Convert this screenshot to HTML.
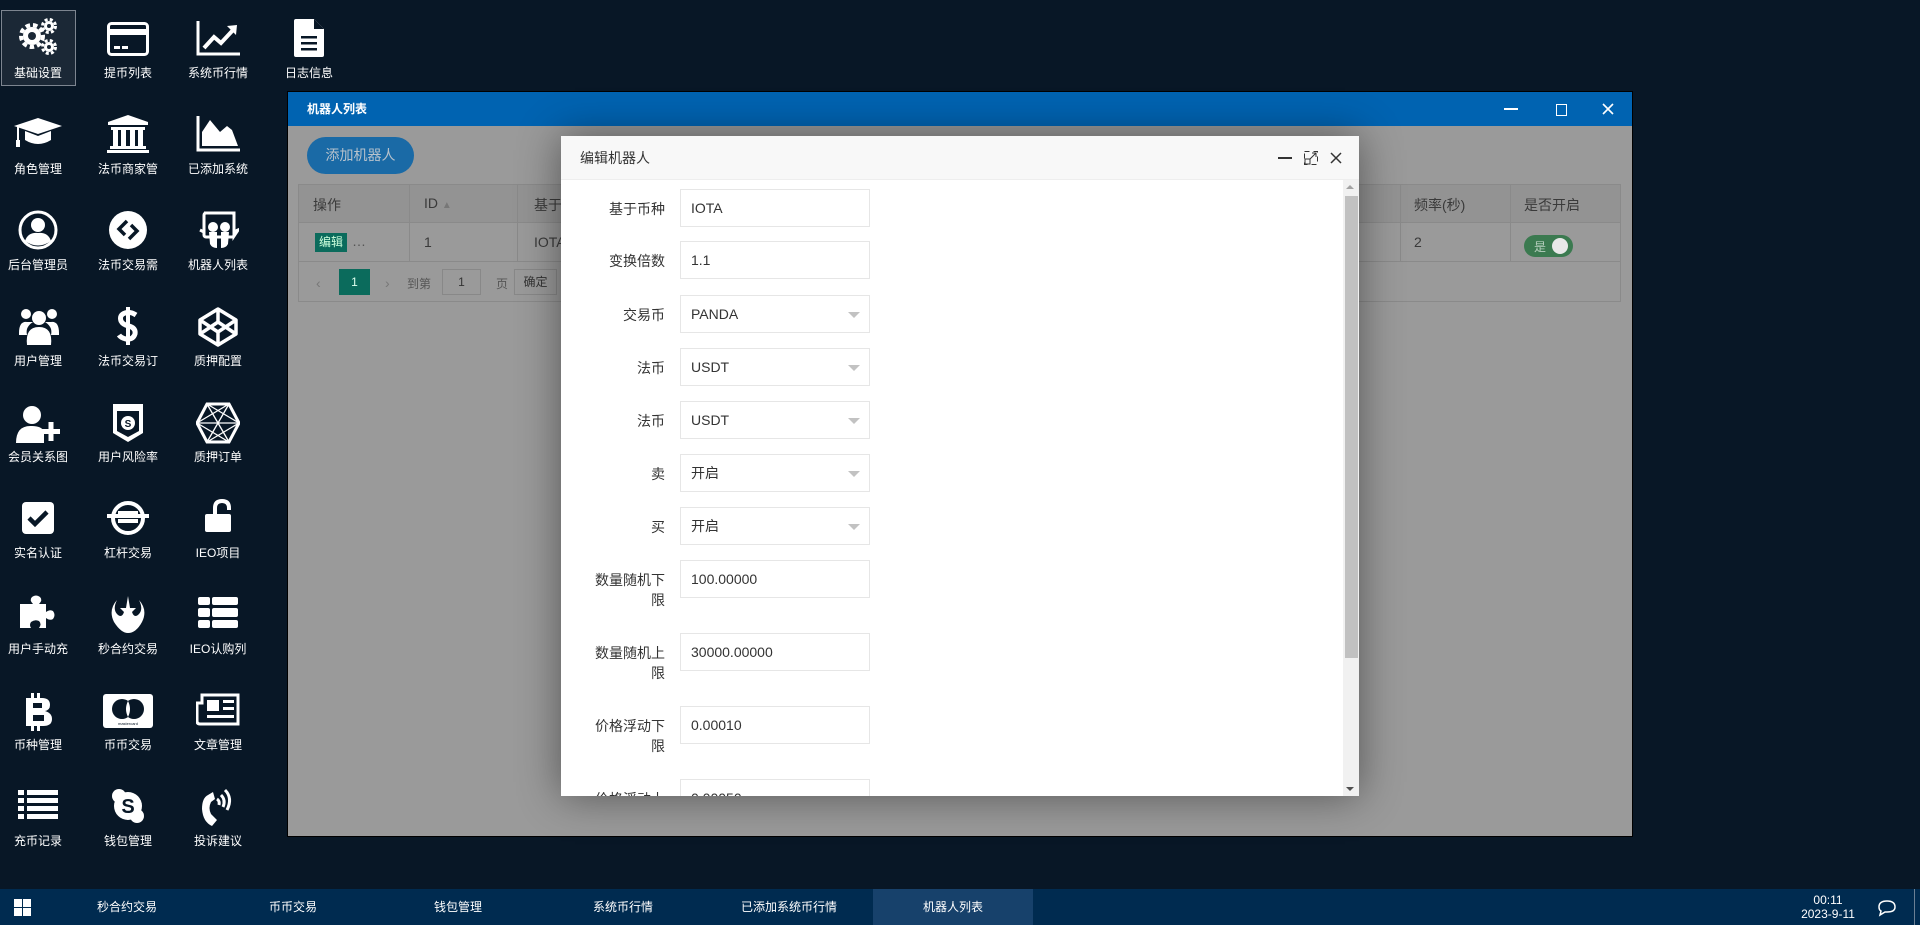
<!DOCTYPE html>
<html><head><meta charset="utf-8"><style>
*{box-sizing:border-box;margin:0;padding:0}
body{width:1920px;height:925px;overflow:hidden;background:#081726;font-family:"Liberation Sans","Noto Sans CJK SC",sans-serif;position:relative}
.ic{position:absolute;width:90px;text-align:center;color:#fff;font-size:12px}
.ic svg{display:block;margin:0 auto}
.lbl{position:absolute;width:90px;text-align:center;color:#fff;font-size:12px;line-height:14px}
.sel{position:absolute;left:1px;top:10px;width:75px;height:76px;border:1px solid #7d8590;background:#1b2836}
.win{position:absolute;left:288px;top:92px;width:1344px;height:744px;background:#9a9a9a;box-shadow:0 0 0 1px #000}
.tb{position:absolute;left:0;top:0;width:100%;height:34px;background:#0063b1;color:#fff;font-size:12px;font-weight:bold;line-height:34px;padding-left:19px}
.a{position:absolute}
.th{position:absolute;font-size:14px;color:#3a3a3a}
.modal{position:absolute;left:561px;top:136px;width:798px;height:660px;background:#fff;box-shadow:0 0 40px rgba(0,0,0,.45);overflow:hidden}
.mh{height:44px;background:#f8f8f8;border-bottom:1px solid #eee;font-size:14px;color:#333;line-height:44px;padding-left:19px}
.fl{position:absolute;left:32px;width:72px;text-align:right;font-size:14px;color:#333;line-height:20px}
.in{position:absolute;left:119px;width:190px;height:38px;border:1px solid #e6e6e6;font-size:14px;color:#333;line-height:36px;padding-left:10px}
.tri{position:absolute;right:9px;top:16px;width:0;height:0;border-left:6px solid transparent;border-right:6px solid transparent;border-top:6px solid #c2c2c2}
.task{position:absolute;left:0;top:889px;width:1920px;height:36px;background:#002b50}
.tt{position:absolute;top:0;height:36px;line-height:36px;color:#fff;font-size:12px;text-align:center;width:160px}
</style></head><body>

<div class="sel"></div>

<!-- desktop icons: col centers 38,128,218,309 ; rows icon center 38+96i ; label 73+96i -->
<!-- col1 -->
<svg class="a" style="left:16px;top:16px" width="44" height="44" viewBox="0 0 44 44" fill="#fff">
<circle cx="16" cy="20" r="9"/><circle cx="16" cy="20" r="11" fill="none" stroke="#fff" stroke-width="4" stroke-dasharray="4.5 3"/><circle cx="16" cy="20" r="4" fill="#1b2836"/>
<circle cx="33" cy="10" r="5"/><circle cx="33" cy="10" r="6.5" fill="none" stroke="#fff" stroke-width="3" stroke-dasharray="3 2.2"/><circle cx="33" cy="10" r="2" fill="#1b2836"/>
<circle cx="33" cy="31" r="5"/><circle cx="33" cy="31" r="6.5" fill="none" stroke="#fff" stroke-width="3" stroke-dasharray="3 2.2"/><circle cx="33" cy="31" r="2" fill="#1b2836"/></svg>
<div class="lbl" style="left:-7px;top:66px">基础设置</div>

<svg class="a" style="left:13px;top:115px" width="50" height="40" viewBox="0 0 50 40" fill="#fff"><path d="M25 3 L49 11 L25 19 L1 11Z"/><path d="M12 16 L12 25 Q25 33 38 25 L38 16 L25 21Z"/><rect x="4" y="12" width="2" height="14"/><rect x="3" y="25" width="4" height="7"/></svg>
<div class="lbl" style="left:-7px;top:162px">角色管理</div>

<svg class="a" style="left:18px;top:210px" width="40" height="40" viewBox="0 0 40 40"><circle cx="20" cy="20" r="18" fill="none" stroke="#fff" stroke-width="3"/><circle cx="20" cy="15" r="7" fill="#fff"/><path d="M7 31 Q10 22 20 23 Q30 22 33 31 Q20 40 7 31Z" fill="#fff"/></svg>
<div class="lbl" style="left:-7px;top:258px">后台管理员</div>

<svg class="a" style="left:17px;top:307px" width="44" height="40" viewBox="0 0 44 40" fill="#fff"><circle cx="9" cy="7" r="5"/><circle cx="35" cy="7" r="5"/><circle cx="22" cy="11" r="7"/><path d="M2 26 Q2 14 10 15 L16 15 Q8 20 10 28 L2 28Z"/><path d="M42 26 Q42 14 34 15 L28 15 Q36 20 34 28 L42 28Z"/><path d="M10 38 Q8 20 22 20 Q36 20 34 38Z"/></svg>
<div class="lbl" style="left:-7px;top:354px">用户管理</div>

<svg class="a" style="left:15px;top:405px" width="46" height="40" viewBox="0 0 46 40" fill="#fff"><circle cx="17" cy="10" r="9"/><path d="M1 38 Q1 20 17 21 Q26 21 29 26 L29 38Z"/><rect x="27" y="24" width="18" height="5"/><rect x="33.5" y="17" width="5" height="19"/></svg>
<div class="lbl" style="left:-7px;top:450px">会员关系图</div>

<svg class="a" style="left:20px;top:500px" width="36" height="36" viewBox="0 0 36 36"><rect x="2" y="2" width="32" height="32" rx="4" fill="#fff"/><path d="M9 18 L15 24 L27 12" stroke="#081726" stroke-width="4.5" fill="none"/></svg>
<div class="lbl" style="left:-7px;top:546px">实名认证</div>

<svg class="a" style="left:19px;top:594px" width="40" height="38" viewBox="0 0 40 38" fill="#fff"><path d="M1 10 L14 10 Q10 6 13 3 Q17 0 21 3 Q24 6 20 10 L27 10 L27 18 Q31 15 34 17 Q37 21 34 25 Q31 27 27 24 L27 34 L20 34 Q23 30 20 27 Q16 25 12 28 Q10 31 12 34 L1 34Z"/></svg>
<div class="lbl" style="left:-7px;top:642px">用户手动充</div>

<svg class="a" style="left:22px;top:692px" width="32" height="40" viewBox="0 0 32 40"><path d="M4 6 L20 6 Q28 6 28 13 Q28 18 23 19 Q30 21 30 27 Q30 34 21 34 L4 34Z" fill="#fff"/><rect x="9" y="1" width="3" height="38" fill="#fff"/><rect x="15" y="1" width="3" height="38" fill="#fff"/><rect x="11" y="11" width="9" height="5" fill="#081726"/><rect x="11" y="23" width="11" height="6" fill="#081726"/></svg>
<div class="lbl" style="left:-7px;top:738px">币种管理</div>

<svg class="a" style="left:18px;top:790px" width="40" height="30" viewBox="0 0 40 30" fill="#fff"><rect x="0" y="0" width="6" height="5"/><rect x="9" y="0" width="31" height="5"/><rect x="0" y="8" width="6" height="5"/><rect x="9" y="8" width="31" height="5"/><rect x="0" y="16" width="6" height="5"/><rect x="9" y="16" width="31" height="5"/><rect x="0" y="24" width="6" height="5"/><rect x="9" y="24" width="31" height="5"/></svg>
<div class="lbl" style="left:-7px;top:834px">充币记录</div>

<!-- col2 -->
<svg class="a" style="left:107px;top:22px" width="42" height="34" viewBox="0 0 42 34"><rect x="1.5" y="1.5" width="39" height="31" rx="3" fill="none" stroke="#fff" stroke-width="3"/><rect x="2" y="7" width="38" height="6" fill="#fff"/><rect x="7" y="24" width="6" height="3" fill="#fff"/><rect x="15" y="24" width="6" height="3" fill="#fff"/></svg>
<div class="lbl" style="left:83px;top:66px">提币列表</div>

<svg class="a" style="left:106px;top:114px" width="44" height="40" viewBox="0 0 44 40" fill="#fff"><path d="M22 1 L42 8 L42 11 L2 11 L2 8Z"/><rect x="5" y="13" width="34" height="3"/><rect x="7" y="16" width="5" height="16"/><rect x="15" y="16" width="5" height="16"/><rect x="24" y="16" width="5" height="16"/><rect x="32" y="16" width="5" height="16"/><rect x="4" y="32" width="36" height="3"/><rect x="1" y="36" width="42" height="3"/></svg>
<div class="lbl" style="left:83px;top:162px">法币商家管</div>

<svg class="a" style="left:108px;top:210px" width="40" height="40" viewBox="0 0 40 40"><circle cx="20" cy="20" r="19" fill="#fff"/><path d="M19 11 L11 19 L17 25 M21 29 L29 21 L23 15" stroke="#081726" stroke-width="3.5" fill="none"/></svg>
<div class="lbl" style="left:83px;top:258px">法币交易需</div>

<svg class="a" style="left:116px;top:305px" width="24" height="42" viewBox="0 0 24 42"><path d="M20 10 Q14 6 9 8 Q3 10 5 16 Q7 20 13 21 Q20 23 19 29 Q17 35 10 34 Q5 33 3 30" stroke="#fff" stroke-width="5" fill="none"/><rect x="10" y="2" width="4" height="38" fill="#fff"/></svg>
<div class="lbl" style="left:83px;top:354px">法币交易订</div>

<svg class="a" style="left:111px;top:403px" width="34" height="40" viewBox="0 0 34 40"><path d="M2 1 L32 1 L32 30 L17 39 L2 30Z" fill="#fff"/><path d="M6 8 L28 8 L28 28 L17 34 L6 28Z" fill="#081726"/><circle cx="17" cy="20" r="7" fill="#fff"/><text x="17" y="24" font-size="10" text-anchor="middle" fill="#081726" font-family="Liberation Sans" font-weight="bold">S</text></svg>
<div class="lbl" style="left:83px;top:450px">用户风险率</div>

<svg class="a" style="left:106px;top:500px" width="44" height="36" viewBox="0 0 44 36"><circle cx="22" cy="18" r="15" fill="none" stroke="#fff" stroke-width="4"/><rect x="1" y="14" width="42" height="4" fill="#fff"/><rect x="12" y="11" width="20" height="3" fill="#fff"/><rect x="12" y="19" width="20" height="4" fill="#fff"/></svg>
<div class="lbl" style="left:83px;top:546px">杠杆交易</div>

<svg class="a" style="left:108px;top:594px" width="40" height="40" viewBox="0 0 40 40"><path d="M9 6 Q0 16 6 28 Q13 39 20 39 Q28 39 34 28 Q40 16 31 6 Q36 16 30 21 Q26 24 24 18 L28 14 L22 14 L20 2 L18 14 L12 14 L16 18 Q14 24 10 21 Q4 16 9 6Z" fill="#fff"/></svg>
<div class="lbl" style="left:83px;top:642px">秒合约交易</div>

<svg class="a" style="left:103px;top:694px" width="50" height="34" viewBox="0 0 50 34"><rect x="0" y="0" width="50" height="34" rx="3" fill="#fff"/><circle cx="19" cy="15" r="10" fill="#081726"/><circle cx="31" cy="15" r="10" fill="#081726"/><path d="M25 7 Q29 15 25 23 Q21 15 25 7Z" fill="#fff"/><text x="25" y="31" font-size="4" text-anchor="middle" fill="#081726" font-family="Liberation Sans">mastercard</text></svg>
<div class="lbl" style="left:83px;top:738px">币币交易</div>

<svg class="a" style="left:111px;top:788px" width="34" height="36" viewBox="0 0 34 36"><circle cx="17" cy="18" r="14" fill="#fff"/><circle cx="8" cy="8" r="7" fill="#fff"/><circle cx="26" cy="28" r="7" fill="#fff"/><text x="17" y="25" font-size="20" text-anchor="middle" fill="#081726" font-family="Liberation Sans" font-weight="bold">S</text></svg>
<div class="lbl" style="left:83px;top:834px">钱包管理</div>

<!-- col3 -->
<svg class="a" style="left:196px;top:20px" width="46" height="36" viewBox="0 0 46 36"><path d="M2 1 L2 34 L44 34" stroke="#fff" stroke-width="3" fill="none"/><path d="M8 28 L18 17 L25 23 L38 9" stroke="#fff" stroke-width="4" fill="none"/><path d="M31 6 L41 5 L40 15Z" fill="#fff"/></svg>
<div class="lbl" style="left:173px;top:66px">系统币行情</div>

<svg class="a" style="left:196px;top:116px" width="46" height="36" viewBox="0 0 46 36" fill="#fff"><path d="M2 0 L2 34 L44 34" stroke="#fff" stroke-width="3" fill="none"/><path d="M6 30 L6 16 L14 4 L24 16 L31 10 L36 14 L42 30Z"/></svg>
<div class="lbl" style="left:173px;top:162px">已添加系统</div>

<svg class="a" style="left:199px;top:210px" width="40" height="40" viewBox="0 0 40 40"><path d="M5 3 L35 3 L35 22 L39 20 L35 26 L35 3" stroke="#fff" stroke-width="3" fill="none"/><rect x="5" y="3" width="30" height="24" rx="2" fill="none" stroke="#fff" stroke-width="3"/><path d="M1 20 L5 22 M39 20 L35 22" stroke="#fff" stroke-width="3"/><circle cx="14" cy="17" r="5" fill="#fff"/><circle cx="26" cy="17" r="5" fill="#fff"/><path d="M10 22 L18 22 L18 38 Q13 38 11 34Z M22 22 L30 22 L29 34 Q27 38 22 38Z" fill="#fff"/></svg>
<div class="lbl" style="left:173px;top:258px">机器人列表</div>

<svg class="a" style="left:197px;top:306px" width="42" height="42" viewBox="0 0 42 42"><path d="M21 3 L39 14 L39 28 L21 39 L3 28 L3 14Z M3 14 L21 26 L39 14 M3 28 L21 16 L39 28 M21 3 L21 16 M21 26 L21 39" stroke="#fff" stroke-width="3.5" fill="none" stroke-linejoin="round"/></svg>
<div class="lbl" style="left:173px;top:354px">质押配置</div>

<svg class="a" style="left:196px;top:401px" width="44" height="44" viewBox="0 0 44 44"><path d="M11 3 L33 3 L43 22 L33 41 L11 41 L1 22Z" stroke="#fff" stroke-width="3" fill="none"/><path d="M11 3 L33 41 M33 3 L11 41 M1 22 L43 22 M11 3 L43 22 L11 41 M33 3 L1 22 L33 41" stroke="#fff" stroke-width="1.3" fill="none"/></svg>
<div class="lbl" style="left:173px;top:450px">质押订单</div>

<svg class="a" style="left:204px;top:498px" width="28" height="36" viewBox="0 0 28 36"><path d="M11 16 L11 10 Q11 3 18 3 Q25 3 25 10 L25 12" stroke="#fff" stroke-width="4" fill="none"/><rect x="1" y="16" width="26" height="18" rx="2" fill="#fff"/></svg>
<div class="lbl" style="left:173px;top:546px">IEO项目</div>

<svg class="a" style="left:198px;top:597px" width="40" height="32" viewBox="0 0 40 32" fill="#fff"><rect x="0" y="0" width="12" height="8" rx="2"/><rect x="14" y="0" width="26" height="8" rx="2"/><rect x="0" y="11" width="12" height="9" rx="2"/><rect x="14" y="11" width="26" height="9" rx="2"/><rect x="0" y="23" width="12" height="8" rx="2"/><rect x="14" y="23" width="26" height="8" rx="2"/></svg>
<div class="lbl" style="left:173px;top:642px">IEO认购列</div>

<svg class="a" style="left:196px;top:693px" width="44" height="34" viewBox="0 0 44 34"><path d="M6 2 L42 2 L42 31 L4 31 Q1 31 1 28 L1 10 L6 10Z" stroke="#fff" stroke-width="3" fill="none"/><rect x="11" y="7" width="12" height="11" fill="#fff"/><rect x="27" y="7" width="11" height="3" fill="#fff"/><rect x="27" y="14" width="11" height="3" fill="#fff"/><rect x="11" y="22" width="27" height="3" fill="#fff"/></svg>
<div class="lbl" style="left:173px;top:738px">文章管理</div>

<svg class="a" style="left:200px;top:787px" width="36" height="40" viewBox="0 0 36 40"><path d="M8 8 Q2 11 2 22 Q3 35 12 39 L17 33 L11 27 Q8 21 11 15 L15 12 L13 5Z" fill="#fff"/><path d="M17 12 Q20 14 19 18 M21 8 Q26 13 23 20 M25 3 Q33 11 27 23" stroke="#fff" stroke-width="3" fill="none"/></svg>
<div class="lbl" style="left:173px;top:834px">投诉建议</div>

<!-- col4 -->
<svg class="a" style="left:293px;top:18px" width="32" height="40" viewBox="0 0 32 40"><path d="M1 3 Q1 1 3 1 L21 1 L31 11 L31 37 Q31 39 29 39 L3 39 Q1 39 1 37Z" fill="#fff"/><path d="M21 1 L21 11 L31 11" fill="#081726"/><rect x="8" y="18" width="16" height="2.5" fill="#081726"/><rect x="8" y="24" width="16" height="2.5" fill="#081726"/><rect x="8" y="30" width="16" height="2.5" fill="#081726"/></svg>
<div class="lbl" style="left:264px;top:66px">日志信息</div>

<!-- main window -->
<div class="win">
 <div class="tb">机器人列表
  <div class="a" style="left:1216px;top:16px;width:14px;height:2px;background:#fff"></div>
  <div class="a" style="left:1268px;top:12px;width:11px;height:12px;border:1.5px solid #fff"></div>
  <svg class="a" style="left:1314px;top:11px" width="12" height="12" viewBox="0 0 12 12"><path d="M1 1L11 11M11 1L1 11" stroke="#fff" stroke-width="1.6"/></svg>
 </div>
 <div class="a" style="left:19px;top:45px;width:107px;height:37px;border-radius:19px;background:#1a6aa6;color:#b7c2cc;font-size:14px;line-height:37px;text-align:center">添加机器人</div>
 <div class="a" style="left:10px;top:92px;width:1323px;height:118px;border:1px solid #8a8a8a"></div>
 <div class="a" style="left:11px;top:93px;width:1321px;height:38px;background:#939393;border-bottom:1px solid #8a8a8a"></div>
 <div class="a" style="left:11px;top:169px;width:1321px;height:1px;background:#8a8a8a"></div>
 <div class="a" style="left:121px;top:93px;width:1px;height:76px;background:#8a8a8a"></div>
 <div class="a" style="left:229px;top:93px;width:1px;height:76px;background:#8a8a8a"></div>
 <div class="a" style="left:1112px;top:93px;width:1px;height:76px;background:#8a8a8a"></div>
 <div class="a" style="left:1222px;top:93px;width:1px;height:76px;background:#8a8a8a"></div>
 <div class="th" style="left:25px;top:103px">操作</div>
 <div class="th" style="left:136px;top:103px">ID <span style="font-size:10px;color:#777">&#9650;</span></div>
 <div class="th" style="left:246px;top:103px">基于币种</div>
 <div class="th" style="left:1126px;top:103px">频率(秒)</div>
 <div class="th" style="left:1236px;top:103px">是否开启</div>
 <div class="a" style="left:27px;top:141px;width:32px;height:19px;background:#0b6b5c;color:#cfd;font-size:12px;line-height:19px;text-align:center">编辑</div>
 <div class="th" style="left:64px;top:141px;color:#555">…</div>
 <div class="th" style="left:136px;top:142px">1</div>
 <div class="th" style="left:246px;top:142px">IOTA</div>
 <div class="th" style="left:1126px;top:142px">2</div>
 <div class="a" style="left:1236px;top:143px;width:49px;height:22px;border-radius:11px;background:#3b7a50"><span class="a" style="left:10px;top:3px;color:#b9d0c0;font-size:12px">是</span><span class="a" style="left:28px;top:3px;width:16px;height:16px;border-radius:8px;background:#e8e8e8"></span></div>
 <div class="th" style="left:28px;top:183px;color:#777">&lsaquo;</div>
 <div class="a" style="left:51px;top:177px;width:31px;height:26px;background:#0b6b5c;color:#dfe;font-size:12px;line-height:26px;text-align:center">1</div>
 <div class="th" style="left:97px;top:183px;color:#777">&rsaquo;</div>
 <div class="th" style="left:119px;top:183px;font-size:12px;color:#555">到第</div>
 <div class="a" style="left:154px;top:177px;width:39px;height:26px;border:1px solid #888;font-size:12px;line-height:24px;text-align:center;color:#333">1</div>
 <div class="th" style="left:208px;top:183px;font-size:12px;color:#555">页</div>
 <div class="a" style="left:226px;top:177px;width:43px;height:26px;border:1px solid #888;font-size:12px;line-height:24px;text-align:center;color:#333">确定</div>
</div>

<!-- modal -->
<div class="modal">
 <div class="mh">编辑机器人</div>
 <div class="a" style="left:717px;top:21px;width:14px;height:2px;background:#333"></div>
 <svg class="a" style="left:743px;top:15px" width="14" height="14" viewBox="0 0 14 14"><rect x="0.5" y="0.5" width="13" height="13" fill="none" stroke="#333" stroke-dasharray="5 4"/><rect x="1" y="8" width="5" height="5" fill="none" stroke="#333"/><path d="M6 8 L12 2 M8 2 L12 2 L12 6" stroke="#333" fill="none"/></svg>
 <svg class="a" style="left:769px;top:16px" width="12" height="12" viewBox="0 0 12 12"><path d="M1 1L11 11M11 1L1 11" stroke="#333" stroke-width="1.5"/></svg>

 <div class="fl" style="top:63px">基于币种</div><div class="in" style="top:53px">IOTA</div>
 <div class="fl" style="top:115px">变换倍数</div><div class="in" style="top:105px">1.1</div>
 <div class="fl" style="top:169px">交易币</div><div class="in" style="top:159px">PANDA<i class="tri"></i></div>
 <div class="fl" style="top:222px">法币</div><div class="in" style="top:212px">USDT<i class="tri"></i></div>
 <div class="fl" style="top:275px">法币</div><div class="in" style="top:265px">USDT<i class="tri"></i></div>
 <div class="fl" style="top:328px">卖</div><div class="in" style="top:318px">开启<i class="tri"></i></div>
 <div class="fl" style="top:381px">买</div><div class="in" style="top:371px">开启<i class="tri"></i></div>
 <div class="fl" style="top:434px">数量随机下限</div><div class="in" style="top:424px">100.00000</div>
 <div class="fl" style="top:507px">数量随机上限</div><div class="in" style="top:497px">30000.00000</div>
 <div class="fl" style="top:580px">价格浮动下限</div><div class="in" style="top:570px">0.00010</div>
 <div class="fl" style="top:653px">价格浮动上限</div><div class="in" style="top:643px">0.00050</div>

 <div class="a" style="left:782px;top:44px;width:16px;height:616px;background:#f1f1f1"></div>
 <div class="a" style="left:785px;top:49px;width:0;height:0;border-left:4px solid transparent;border-right:4px solid transparent;border-bottom:4px solid #a3a3a3"></div>
 <div class="a" style="left:785px;top:651px;width:0;height:0;border-left:4px solid transparent;border-right:4px solid transparent;border-top:4px solid #505050"></div>
 <div class="a" style="left:784px;top:60px;width:13px;height:462px;background:#c1c1c1"></div>
</div>

<!-- taskbar -->
<div class="task">
 <svg class="a" style="left:14px;top:10px" width="17" height="17" viewBox="0 0 17 17" fill="#fff"><rect x="0" y="0" width="8" height="8"/><rect x="9" y="0" width="8" height="8"/><rect x="0" y="9" width="8" height="8"/><rect x="9" y="9" width="8" height="8"/></svg>
 <div class="tt" style="left:47px">秒合约交易</div>
 <div class="tt" style="left:213px">币币交易</div>
 <div class="tt" style="left:378px">钱包管理</div>
 <div class="tt" style="left:543px">系统币行情</div>
 <div class="tt" style="left:709px">已添加系统币行情</div>
 <div class="tt" style="left:873px;background:#17416b">机器人列表</div>
 <div class="a" style="left:1790px;top:4px;width:76px;text-align:center;color:#fff;font-size:12px;line-height:14px">00:11<br>2023-9-11</div>
 <svg class="a" style="left:1877px;top:10px" width="20" height="18" viewBox="0 0 20 18"><path d="M10 2 Q18 2 18 8 Q18 13 10 13 L8 13 L3 16 L4 12 Q2 11 2 8 Q2 2 10 2Z" fill="none" stroke="#fff" stroke-width="1.5"/></svg>
 <div class="a" style="left:1914px;top:0;width:1px;height:36px;background:#6a7f94"></div>
</div>
</body></html>
